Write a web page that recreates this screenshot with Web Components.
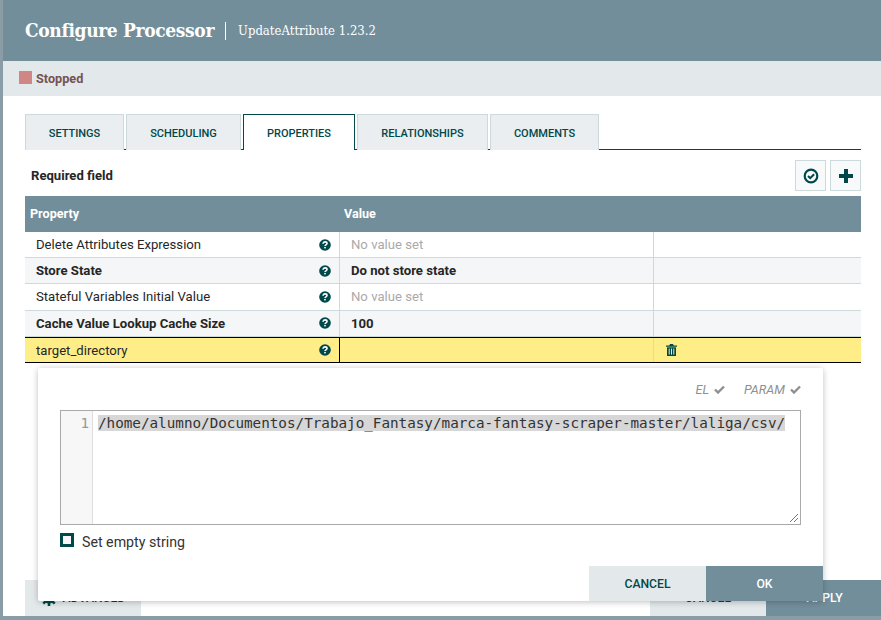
<!DOCTYPE html>
<html>
<head>
<meta charset="utf-8">
<title>Configure Processor</title>
<style>
    html, body { margin: 0; height: 100%; overflow: hidden; }
    body { background: #8a9da7; font-family: 'Roboto', sans-serif; }
</style>
</head>
<body>
<processor-dialog>
    <dialog-header slot="top" title-text="Configure Processor" sub-text="UpdateAttribute 1.23.2"></dialog-header>
    <status-bar slot="top" label="Stopped"></status-bar>
    <tab-bar slot="top" tabs="SETTINGS:99,SCHEDULING:115,PROPERTIES:112,RELATIONSHIPS:131,COMMENTS:109" active="PROPERTIES"></tab-bar>
    <property-toolbar slot="top"></property-toolbar>
    <property-table slot="top">
        <property-row name="Delete Attributes Expression" empty value="No value set"></property-row>
        <property-row name="Store State" bold shaded value="Do not store state"></property-row>
        <property-row name="Stateful Variables Initial Value" empty value="No value set"></property-row>
        <property-row name="Cache Value Lookup Cache Size" bold shaded value="100"></property-row>
        <property-row name="target_directory" selected></property-row>
    </property-table>
    <dialog-footer slot="bottom"></dialog-footer>
    <value-editor slot="over" line="/home/alumno/Documentos/Trabajo_Fantasy/marca-fantasy-scraper-master/laliga/csv/"></value-editor>
</processor-dialog>

<script>
const ICONS = {
    help: `<svg viewBox="0 0 12 12" width="12" height="12"><circle cx="6" cy="6" r="5.8" fill="#004849"/><path d="M4 4.700c.1-1.200 1-1.800 2-1.800 1.200 0 2 .7 2 1.600 0 1.300-2 1.300-2 2.500" fill="none" stroke="#fff" stroke-width="1.600"/><rect x="5.200" y="7.900" width="1.600" height="1.500" fill="#fff"/></svg>`,
    trash: `<svg viewBox="0 0 11 12" width="11" height="12"><path d="M4 0h3l.7 1.500H11v1.200H0V1.500h3.300z" fill="#004849"/><path d="M1 3.300h9V12H1z" fill="#004849"/><path d="M3.200 4.600v6M5.500 4.600v6M7.800 4.600v6" stroke="#ffee88" stroke-width="1"/></svg>`,
    verify: `<svg viewBox="0 0 16 16" width="16" height="16"><circle cx="8" cy="8" r="6.300" fill="none" stroke="#004849" stroke-width="2.200"/><path d="M5 8l2.200 2.200 3.900-4" fill="none" stroke="#004849" stroke-width="2"/></svg>`,
    plus: `<svg viewBox="0 0 14 14" width="14" height="14"><path d="M5 0h4v5h5v4H9v5H5V9H0V5h5z" fill="#004849"/></svg>`,
    check: `<svg viewBox="0 0 11 9" width="11" height="9"><path d="M1 4.500l3 3 6-6" fill="none" stroke="#8f8f8f" stroke-width="2.400"/></svg>`,
    cog: `<svg viewBox="0 0 16 16" width="16" height="16"><circle cx="8" cy="8" r="4" fill="none" stroke="#004849" stroke-width="3"/><path d="M8 0v16M0 8h16M2.300 2.300l11.400 11.400M13.700 2.300L2.300 13.700" stroke="#004849" stroke-width="2.600"/><circle cx="8" cy="8" r="2" fill="#e3e8eb"/></svg>`
};

class ProcessorDialog extends HTMLElement {
    constructor() {
        super();
        this.attachShadow({ mode: 'open' });
        this.shadowRoot.innerHTML = `
            <style>
                :host { display: flex; flex-direction: column; position: relative; margin-left: 3px; height: 616px; background: #fff; }
                .body { flex: 1; display: flex; flex-direction: column; }
                ::slotted([slot="over"]) { position: absolute; left: 35px; top: 368px; }
            </style>
            <div class="body"><slot name="top"></slot></div>
            <slot name="bottom"></slot>
            <slot name="over"></slot>
        `;
    }
}

class DialogHeader extends HTMLElement {
    constructor() {
        super();
        this.attachShadow({ mode: 'open' });
        this.shadowRoot.innerHTML = `
            <style>
                :host { display: flex; align-items: center; height: 61px; background: #728e9b; color: #fff; padding-left: 22px; box-sizing: border-box; }
                .title { font: bold 19px 'DejaVu Serif Condensed', 'DejaVu Serif', serif; font-stretch: condensed; letter-spacing: -0.35px; padding-bottom: 1px; }
                .sub { font: 13px 'DejaVu Serif Condensed', 'DejaVu Serif', serif; font-stretch: condensed; border-left: 1px solid #fff; margin-left: 11px; padding-left: 12px; line-height: 18px; margin-top: 1px; }
            </style>
            <span class="title">${this.getAttribute('title-text')}</span>
            <span class="sub">${this.getAttribute('sub-text')}</span>
        `;
    }
}

class StatusBar extends HTMLElement {
    constructor() {
        super();
        this.attachShadow({ mode: 'open' });
        this.shadowRoot.innerHTML = `
            <style>
                :host { display: flex; align-items: center; height: 35px; background: #e3e8eb; padding-left: 16px; box-sizing: border-box; }
                i { width: 13px; height: 13px; background: #d18686; margin-right: 4px; margin-top: -2px; }
                span { font: bold 12.700px 'Roboto', sans-serif; color: #775351; }
            </style>
            <i></i><span>${this.getAttribute('label')}</span>
        `;
    }
}

class TabBar extends HTMLElement {
    constructor() {
        super();
        this.attachShadow({ mode: 'open' });
        const active = this.getAttribute('active');
        const tabs = this.getAttribute('tabs').split(',').map(item => {
            const [name, width] = item.split(':');
            return `<div class="tab ${name === active ? 'on' : ''}" style="width:${width}px">${name}</div>`;
        }).join('');
        this.shadowRoot.innerHTML = `
            <style>
                :host { display: block; margin: 18px 20px 0 22px; }
                .tabs { display: flex; gap: 2px; height: 35px; border-bottom: 1px solid #004849; }
                .tab { height: 36px; box-sizing: border-box; display: flex; align-items: center; justify-content: center; font: 500 11px 'Roboto', sans-serif;
                       color: #004849; background: #eaeef0; border: 1px solid #ccdadb; border-bottom: none; padding-top: 1px; }
                .tab.on { background: #fff; border: 1px solid #004849; border-bottom: none; }
            </style>
            <div class="tabs">${tabs}</div>
        `;
    }
}

class PropertyToolbar extends HTMLElement {
    constructor() {
        super();
        this.attachShadow({ mode: 'open' });
        this.shadowRoot.innerHTML = `
            <style>
                :host { display: flex; align-items: center; height: 46px; margin: 0 20px 0 22px; padding-left: 6px; }
                b { font: bold 13.100px 'Roboto', sans-serif; color: #262626; flex: 1; margin-top: 4px; }
                .btn { width: 31px; height: 31px; box-sizing: border-box; border: 1px solid #ccdadb; background: #f8f9fa; display: flex; align-items: center; justify-content: center; margin-left: 4px; margin-top: 5px; }
            </style>
            <b>Required field</b>
            <div class="btn">${ICONS.verify}</div>
            <div class="btn">${ICONS.plus}</div>
        `;
    }
}

class PropertyTable extends HTMLElement {
    constructor() {
        super();
        this.attachShadow({ mode: 'open' });
        this.shadowRoot.innerHTML = `
            <style>
                :host { display: block; margin: 0 20px 0 22px; }
                .head { display: grid; grid-template-columns: 315px 1fr; height: 36px; align-items: center; background: #728e9b; color: #fff; font: bold 12.600px 'Roboto', sans-serif; }
                .head span { padding: 0 0 1px 4px; }
                .head span:first-child { padding-left: 5px; }
            </style>
            <div class="head"><span>Property</span><span>Value</span></div>
            <slot></slot>
        `;
    }
}

class PropertyRow extends HTMLElement {
    constructor() {
        super();
        this.attachShadow({ mode: 'open' });
        const value = this.getAttribute('value') || '';
        this.shadowRoot.innerHTML = `
            <style>
                :host { display: grid; grid-template-columns: 315px 314px 1fr; height: 26.200px; box-sizing: border-box; border-bottom: 1px solid #ccdadb; background: #fff;
                        font: 13.150px 'Roboto', sans-serif; color: #262626; }
                :host([shaded]) { background: #f4f6f7; }
                :host([selected]) { background: #ffee88; border-top: 1px solid #000; border-bottom: 1px solid #000; }
                :host([selected]) .name span { padding-top: 1px; }
                :host([bold]) { font-weight: bold; }
                .c { display: flex; align-items: center; box-sizing: border-box; border-right: 1px solid #ccdadb; min-width: 0; }
                :host([selected]) .name { border-right-color: #000; }
                .name { padding: 0 8px 0 11px; justify-content: space-between; }
                .val { padding-left: 11px; }
                :host([empty]) .val { color: #aaa; }
                .end { border-right: none; padding-left: 12px; }
                svg { display: block; }
            </style>
            <div class="c name"><span>${this.getAttribute('name')}</span>${ICONS.help}</div>
            <div class="c val">${value}</div>
            <div class="c end">${this.hasAttribute('selected') ? ICONS.trash : ''}</div>
        `;
    }
}

class ActionButton extends HTMLElement {
    constructor() {
        super();
        this.attachShadow({ mode: 'open' });
        this.shadowRoot.innerHTML = `
            <style>
                :host { display: flex; align-items: center; justify-content: center; gap: 6px; width: 117px; height: 35px; background: #e3e8eb; color: #004849; font: 500 12.200px 'Roboto', sans-serif; }
                :host([primary]) { background: #728e9b; color: #fff; }
            </style>
            <slot></slot>
        `;
    }
}

class DialogFooter extends HTMLElement {
    constructor() {
        super();
        this.attachShadow({ mode: 'open' });
        this.shadowRoot.innerHTML = `
            <style>
                :host { display: flex; justify-content: space-between; padding-left: 22px; height: 36px; }
                .r { display: flex; }
                action-button { height: 36px; }
                .adv { width: 116px; }
            </style>
            <action-button class="adv">${ICONS.cog}<span>ADVANCED</span></action-button>
            <div class="r"><action-button style="width:116px">CANCEL</action-button><action-button primary style="width:115px;box-sizing:border-box;padding-left:2px">APPLY</action-button></div>
        `;
    }
}

class ValueEditor extends HTMLElement {
    constructor() {
        super();
        this.attachShadow({ mode: 'open' });
        this.shadowRoot.innerHTML = `
            <style>
                :host { display: flex; flex-direction: column; width: 785px; height: 233px; background: #fff; box-shadow: 0 1px 6px rgba(0,0,0,.25); box-sizing: border-box; padding: 0 22px; border-radius: 2px; }
                .flags { display: flex; justify-content: flex-end; align-items: center; height: 42px; font: italic 12.600px 'Roboto', sans-serif; color: #8f8f8f; }
                .flags span { display: flex; align-items: center; gap: 5px; margin-left: 19px; }
                .code { height: 115px; box-sizing: border-box; border: 1px solid #aaa; display: flex; position: relative; }
                .gutter { width: 32px; background: #f7f7f7; border-right: 1px solid #ddd; font: 14.280px/17px 'DejaVu Sans Mono', monospace; color: #999; text-align: right; padding: 4px 3px 0 0; box-sizing: border-box; }
                .line { font: 14.280px/17px 'DejaVu Sans Mono', monospace; color: #333; margin: 4px 0 0 5px; white-space: pre; }
                .line mark { background: #d7d7d7; color: inherit; }
                .grip { position: absolute; right: 1px; bottom: 1px; }
                .empty { display: flex; align-items: center; height: 33px; font: 14.200px 'Roboto', sans-serif; color: #333; }
                .empty i { width: 14px; height: 14px; box-sizing: border-box; border: 3px solid #004849; background: #f4f6f7; margin-right: 8px; margin-top: -3px; }
                .acts { display: flex; justify-content: flex-end; margin: auto -22px 0 0; }
            </style>
            <div class="flags"><span>EL ${ICONS.check}</span><span>PARAM ${ICONS.check}</span></div>
            <div class="code">
                <div class="gutter">1</div>
                <div class="line"><mark>${this.getAttribute('line')}</mark></div>
                <svg class="grip" width="11" height="11" viewBox="0 0 11 11"><path d="M2 10l8-8M6 10l4-4" stroke="#777" stroke-width="1"/></svg>
            </div>
            <div class="empty"><i></i>Set empty string</div>
            <div class="acts"><action-button>CANCEL</action-button><action-button primary>OK</action-button></div>
        `;
    }
}

customElements.define('processor-dialog', ProcessorDialog);
customElements.define('dialog-header', DialogHeader);
customElements.define('status-bar', StatusBar);
customElements.define('tab-bar', TabBar);
customElements.define('property-toolbar', PropertyToolbar);
customElements.define('property-table', PropertyTable);
customElements.define('property-row', PropertyRow);
customElements.define('action-button', ActionButton);
customElements.define('dialog-footer', DialogFooter);
customElements.define('value-editor', ValueEditor);
</script>
</body>
</html>
